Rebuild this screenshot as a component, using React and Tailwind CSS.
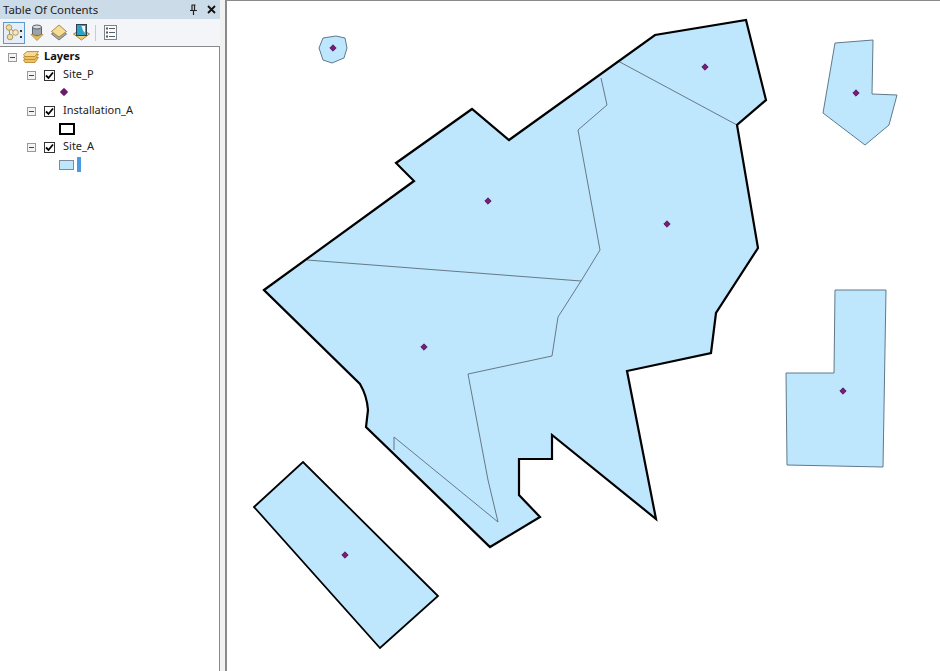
import React from "react";

const FONT = { fontFamily: '"Noto Sans", "Open Sans", sans-serif' };

const OUTLINE =
  "M264 290L414 181L396 163L472 109L509 140L655 35L746 20L766 100L737 125L758 248L716 313L711 353L627 371L656 519L552 435L552 459L519 459L519 495L540 517L490 547L366 427L368 410Q367 396 360 384Z";

const points = [
  [333, 48],
  [705, 67],
  [856, 93],
  [488, 201],
  [667, 224],
  [424, 347],
  [843, 391],
  [345, 555],
];

function PinIcon() {
  return (
    <svg width="9" height="11" viewBox="0 0 9 11">
      <path d="M2.5 1H6.5M3 1V6M5.5 1V6M1 6.5H8M4.5 7V11" stroke="#222" strokeWidth="1.2" fill="none" />
    </svg>
  );
}

function CloseIcon() {
  return (
    <svg width="9" height="9" viewBox="0 0 9 9">
      <path d="M1 1L8 8M8 1L1 8" stroke="#111" strokeWidth="1.8" fill="none" />
    </svg>
  );
}

function DrawOrderIcon() {
  return (
    <svg width="18" height="17" viewBox="0 0 18 17">
      <path d="M4 4L10 8M4 4L5 13" stroke="#8f8a70" strokeWidth="1" />
      <circle cx="4" cy="3.5" r="2.8" fill="#f1dc9e" stroke="#b39a55" />
      <circle cx="5" cy="13" r="2.8" fill="#f1dc9e" stroke="#b39a55" />
      <circle cx="10.5" cy="8.5" r="2.8" fill="#f6e6b8" stroke="#b39a55" />
      <path d="M15 6H17V8H15ZM15 12H17V14H15Z" fill="#333" />
    </svg>
  );
}

function SourceIcon() {
  return (
    <svg width="14" height="17" viewBox="0 0 14 17">
      <path d="M2.5 3V10C2.5 12 11.5 12 11.5 10V3Z" fill="#9aa3ab" stroke="#5a626a" />
      <ellipse cx="7" cy="3" rx="4.5" ry="2" fill="#d6dce2" stroke="#5a626a" />
      <path d="M1 10.5L7 16.5L13 10.5L11 10.5C9.5 12.5 4.5 12.5 3 10.5Z" fill="#e8bd5c" stroke="#a98a3f" strokeWidth="0.8" />
    </svg>
  );
}

function VisibleIcon() {
  return (
    <svg width="16" height="17" viewBox="0 0 16 17">
      <path d="M0.5 10L8 16L15.5 10L8 5Z" fill="#a8a8a8" stroke="#777" />
      <path d="M0.5 7.5L8 13L15.5 7.5L8 1Z" fill="#f6dd97" stroke="#a98a3f" />
    </svg>
  );
}

function SelectionIcon() {
  return (
    <svg width="17" height="17" viewBox="0 0 17 17">
      <path d="M0.5 10L8.5 16L16.5 10L8.5 5Z" fill="#f0cc7a" stroke="#a98a3f" />
      <rect x="3.5" y="0.5" width="10" height="11" fill="#2ba3c4" stroke="#2c4250" />
      <path d="M8.5 2H12V9L10 6.5Z" fill="#f4f8fa" />
    </svg>
  );
}

function OptionsIcon() {
  return (
    <svg width="13" height="15" viewBox="0 0 13 15">
      <rect x="0.5" y="0.5" width="12" height="14" fill="#fbfbfb" stroke="#7a838b" />
      <path d="M5 3.5H11M5 7.5H11M5 11.5H11" stroke="#56606a" />
      <rect x="2" y="2.5" width="2" height="2" fill="#4d5862" />
      <rect x="2" y="6.5" width="2" height="2" fill="#4d5862" />
      <rect x="2" y="10.5" width="2" height="2" fill="#4d5862" />
    </svg>
  );
}

function LayersIcon() {
  return (
    <svg width="16" height="12" viewBox="0 0 16 12">
      <path d="M0.5 9L4 6.5H15.5L12 11.5H2Z" fill="#f0c163" stroke="#b58b32" strokeWidth="0.9" />
      <path d="M0.5 6L4 3.5H15.5L12 8.5H2Z" fill="#f0c163" stroke="#b58b32" strokeWidth="0.9" />
      <path d="M0.5 3.5L4 0.5H15.5L12 5.5H2Z" fill="#f6d98f" stroke="#b58b32" strokeWidth="0.9" />
    </svg>
  );
}

function Expander() {
  return (
    <span className="flex w-[9px] h-[9px] items-center justify-center border border-[#9a9a9a] bg-[#f4f4f4]">
      <span className="w-[5px] h-px bg-[#444]" />
    </span>
  );
}

function Check() {
  return (
    <span className="flex w-[11px] h-[11px] items-center justify-center border border-[#333] bg-white">
      <svg width="9" height="9" viewBox="0 0 9 9">
        <path d="M1 4.5L3.5 7L8 1.5" stroke="#000" strokeWidth="1.8" fill="none" />
      </svg>
    </span>
  );
}

function LayerRow({ name }) {
  return (
    <div className="flex items-center h-[18px] pl-[27px]">
      <Expander />
      <span className="ml-[8px]">
        <Check />
      </span>
      <span className="ml-[8px] -mt-[2px] text-[11px] text-[#222]">{name}</span>
    </div>
  );
}

function SymbolRow({ children }) {
  return <div className="flex items-center h-[18px] pl-[59px]">{children}</div>;
}

function Sidebar() {
  return (
    <div className="flex flex-col w-[220px] h-full shrink-0" style={FONT}>
      <div className="flex items-center justify-between h-[19px] bg-[#ccdbe8] pl-[3px] pr-[4px]">
        <span className="text-[11.4px] text-[#222]">Table Of Contents</span>
        <div className="flex items-center gap-[9px]">
          <PinIcon />
          <CloseIcon />
        </div>
      </div>
      <div className="flex items-center h-[27px] bg-[#f3f5f8] pl-[3px]">
        <div className="flex items-center justify-center w-[22px] h-[22px] border border-[#5b9bd0] bg-[#e4eefa]">
          <DrawOrderIcon />
        </div>
        <div className="ml-[5px]">
          <SourceIcon />
        </div>
        <div className="ml-[7px]">
          <VisibleIcon />
        </div>
        <div className="ml-[6px]">
          <SelectionIcon />
        </div>
        <div className="w-px h-[16px] bg-[#c8ccd0] ml-[5px]" />
        <div className="ml-[8px]">
          <OptionsIcon />
        </div>
      </div>
      <div className="flex-1 bg-white border-t border-r border-[#8a8a8a] pt-[1px]">
        <div className="flex items-center h-[18px] pl-[8px]">
          <Expander />
          <span className="ml-[6px] flex">
            <LayersIcon />
          </span>
          <span className="ml-[5px] -mt-[2px] text-[11px] font-bold text-[#111]">Layers</span>
        </div>
        <LayerRow name="Site_P" />
        <SymbolRow>
          <span className="w-[6px] h-[6px] ml-[2px] -mt-[2px] rotate-45 rounded-[1px] bg-[#6d1a6d]" />
        </SymbolRow>
        <LayerRow name="Installation_A" />
        <SymbolRow>
          <span className="w-[16px] h-[12px] -mt-[1px] border-2 border-black bg-white" />
        </SymbolRow>
        <LayerRow name="Site_A" />
        <SymbolRow>
          <span className="w-[15px] h-[10px] -mt-[1px] border border-[#7d8b96] bg-[#bee6fd]" />
          <span className="w-[4px] h-[15px] -mt-[1px] ml-[3px] bg-[#4a9be4]" />
        </SymbolRow>
      </div>
    </div>
  );
}

function MapView() {
  return (
    <div className="flex-1 h-full bg-white border-l-2 border-t border-[#8a8a8a] overflow-hidden">
      <svg width="713" height="671" viewBox="227 1 713 671" className="block">
        <g fill="#bee6fd" stroke="#5f7a8c" strokeWidth="1">
          <path d="M319 48L323 38L336 36L345 38L347 48L344 58L332 63L323 60Z" />
          <path d="M835 43L873 40L872 94L897 95L889 125L865 145L823 113Z" />
          <path d="M835 290L886 290L883 467L787 465L786 373L834 373Z" />
        </g>
        <path d={OUTLINE} fill="#bee6fd" />
        <g fill="none" stroke="#5c6c78" strokeWidth="0.9">
          <path d="M618 61L737 125" />
          <path d="M601 78L607 105L578 130L600 250L581 281L558 317L552 356L468 374L488 480L498 522L394 437L394 450" />
          <path d="M307 260L581 281" />
        </g>
        <path d={OUTLINE} fill="none" stroke="#000" strokeWidth="2.2" />
        <path d="M254 507L303 462L438 596L380 648Z" fill="#bee6fd" stroke="#000" strokeWidth="1.8" />
        {points.map(([x, y]) => (
          <path
            key={`${x}-${y}`}
            d={`M${x} ${y - 3.2}L${x + 3.2} ${y}L${x} ${y + 3.2}L${x - 3.2} ${y}Z`}
            fill="#7a1a7a"
            stroke="#4a1050"
            strokeWidth="0.8"
            strokeLinejoin="round"
          />
        ))}
      </svg>
    </div>
  );
}

export default function App() {
  return (
    <div className="flex w-[940px] h-[671px] overflow-hidden bg-[#f1f1f1]">
      <Sidebar />
      <div className="w-[5px] h-full shrink-0 bg-[#f1f1f1]" />
      <MapView />
    </div>
  );
}
